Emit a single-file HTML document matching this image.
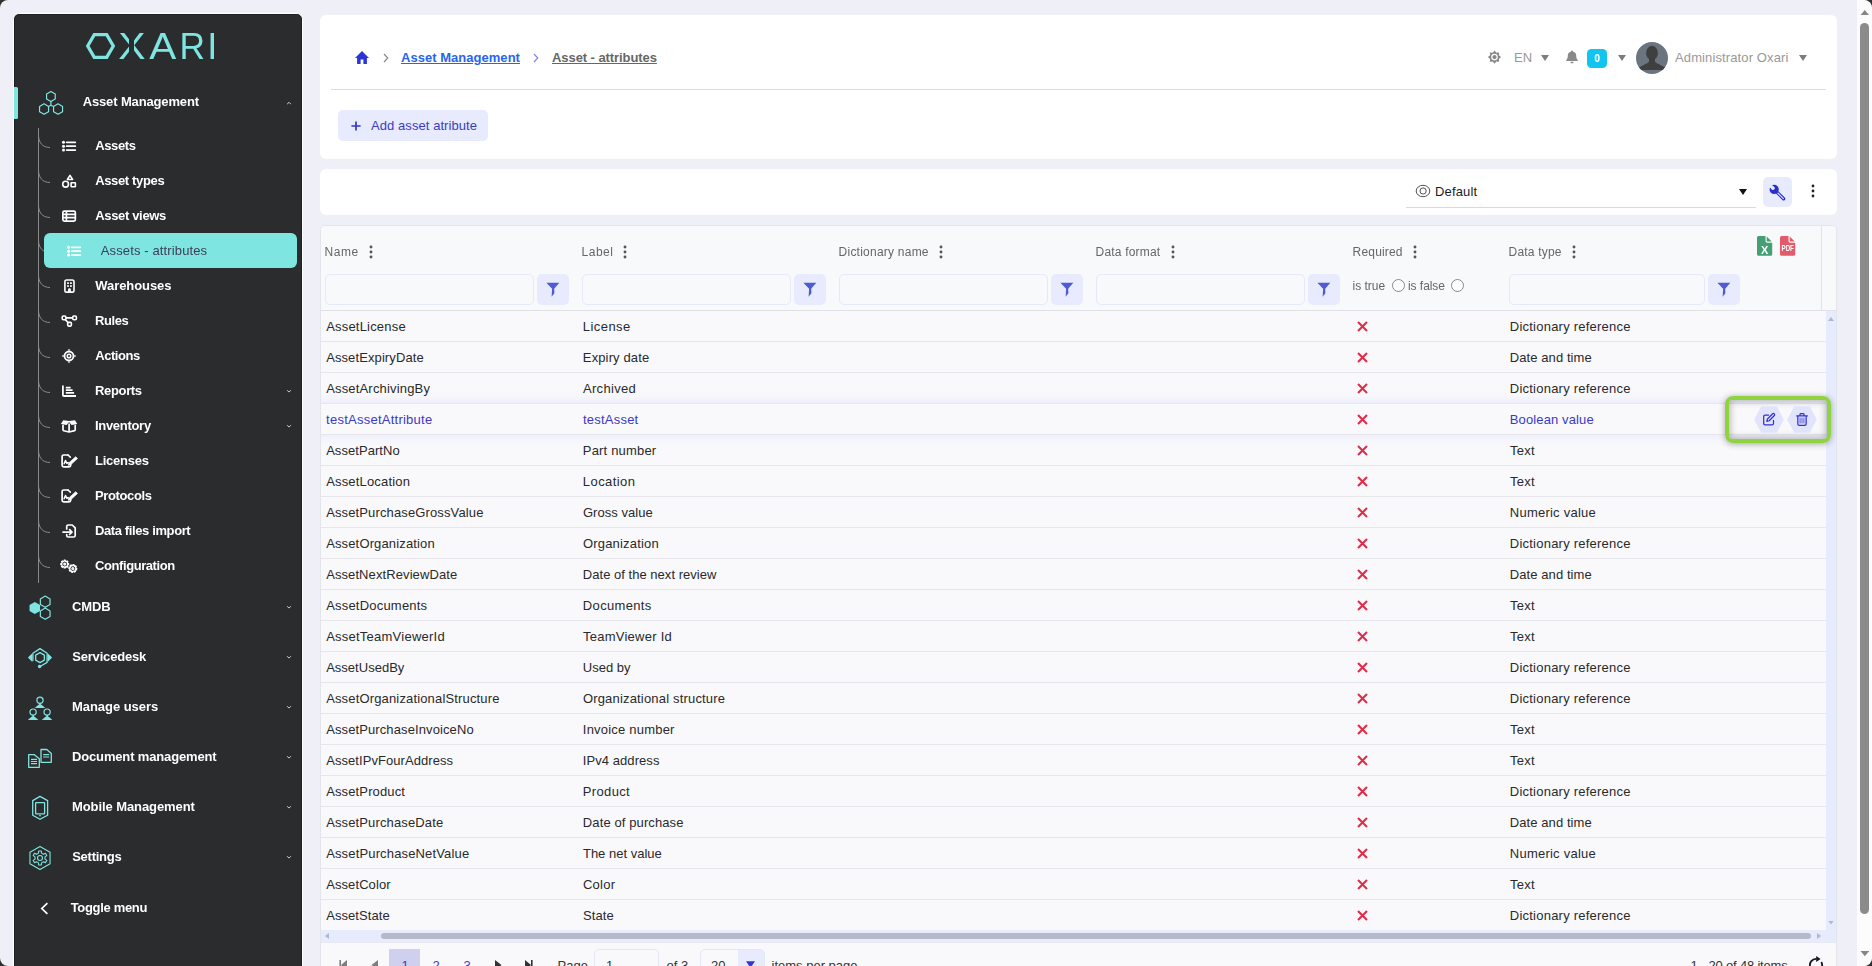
<!DOCTYPE html><html lang="en"><head><meta charset="utf-8"><title>Asset - attributes</title><style>
html{background:#303030;}
body{margin:0;width:1872px;height:966px;overflow:hidden;position:relative;background:#eeeff7;border-radius:8px;font-family:"Liberation Sans",sans-serif;font-size:13px;color:#2b2b2b;}
*{box-sizing:border-box;}
.abs{position:absolute;}
.side{position:absolute;left:13px;top:13px;width:290px;height:954px;background:#2b2c2e;border:1px solid #fff;border-bottom:0;box-shadow:inset 0 0 0 1px #1f1f21;border-radius:6px 6px 0 0;will-change:transform;overflow:hidden;}
.mi{position:absolute;left:0;width:288px;height:24px;}
.mi .ic{position:absolute;left:12px;top:-2px;}
.mi .tx{position:absolute;left:58px;top:1px;line-height:24px;font-weight:bold;font-size:13px;color:#fff;letter-spacing:-0.42px;white-space:nowrap;}
.chev{position:absolute;left:272px;width:6px;height:4px;}
.si{position:absolute;left:0;width:288px;height:20px;}
.si .ic{position:absolute;left:45px;top:0;}
.si .tx{position:absolute;left:81px;top:1px;line-height:20px;font-weight:bold;font-size:13px;color:#fff;letter-spacing:-0.45px;white-space:nowrap;}
.card{position:absolute;left:320px;width:1517px;background:#fff;border-radius:6px;}
.grid{position:absolute;left:320px;top:225px;width:1517px;height:760px;background:#f9f9fc;border:1px solid #e4e5ec;border-radius:5px 5px 0 0;}
.hd{position:absolute;top:245px;line-height:14px;font-size:12px;color:#666;white-space:nowrap;letter-spacing:0.08px;}
.dots{position:absolute;width:4px;height:14px;}
.fin{position:absolute;top:274px;height:31px;border:1px solid #e5e9fb;border-radius:5px;background:#f8f9fb;}
.fbt{position:absolute;top:274px;width:32px;height:31px;border-radius:5px;background:#e7ebfd;}
.row{position:absolute;left:321px;width:1505px;height:31px;border-bottom:1px solid #e6e6ec;}
.c{position:absolute;top:1px;line-height:30px;font-size:13px;color:#2a2a2a;white-space:nowrap;letter-spacing:0.14px;}
.row.hl .c{color:#3a3ac6;}
.x{position:absolute;left:35px;top:10px;}
.pg{position:absolute;top:953.5px;line-height:24px;font-size:13px;color:#3a3ac6;white-space:nowrap;}
</style></head><body>
<div class="side">
<svg class="abs" style="left:66px;top:14px;overflow:visible" width="150" height="36" viewBox="80 28 150 36" role="img" aria-label="OXARI"><title>OXARI</title><g fill="none" stroke="#7fe5e0" stroke-width="3.3"><polygon points="87.7,46 94.3,34.6 106.7,34.6 113.3,46 106.7,57.4 94.3,57.4"/></g><text font-family="Liberation Sans, sans-serif" font-size="36.5" fill="#7fe5e0" y="59"><tspan x="118.2" textLength="27.3" lengthAdjust="spacingAndGlyphs">X</tspan><tspan x="149.2" textLength="27" lengthAdjust="spacingAndGlyphs">A</tspan><tspan x="179.6" textLength="25.5" lengthAdjust="spacingAndGlyphs">R</tspan><tspan x="207.2">I</tspan></text><rect x="129.4" y="30" width="4.9" height="32" fill="#2b2c2e" shape-rendering="crispEdges"/></svg>
<div class="abs" style="left:0;top:73px;width:4px;height:32px;background:#7fe5e0;border-radius:0 1.5px 1.5px 0"></div>
<div class="mi" style="top:77px"><div class="ic" style="left:23px;top:-4px"><svg width="28" height="28" viewBox="0 0 28 28" style="display:block;overflow:visible"><g fill="none" stroke="#7fe5e0" stroke-width="1.2" stroke-linejoin="round"><polygon points="18.23,12 13.9,14.5 9.57,12 9.57,7 13.9,4.5 18.23,7"/><polygon points="11.55,24.65 7.05,27.25 2.55,24.65 2.55,19.45 7.05,16.85 11.55,19.45"/><polygon points="25.55,24.65 21.05,27.25 16.55,24.65 16.55,19.45 21.05,16.85 25.55,19.45"/><path d="M13.9 14.5V18.3M11.55 19.45 13.9 18.3 16.55 19.45"/></g></svg></div><div class="tx" style="left:68.69px;top:-1px;letter-spacing:-0.138px">Asset Management</div></div>
<svg class="chev" style="top:87px" viewBox="0 0 6 4"><path d="M1.1 3.2 L3 1.3 L4.9 3.2" fill="none" stroke="#d0d0d0" stroke-width="1"/></svg>
<svg class="abs" style="left:0;top:0" width="60" height="600" viewBox="14 14 60 600"><g fill="none" stroke="#8a8a8c" stroke-width="1"><path d="M38.5 128V583"/><path d="M38.5 135 C38.5 142 42 147.5 50 147.5"/><path d="M38.5 170 C38.5 177 42 182.5 50 182.5"/><path d="M38.5 205 C38.5 212 42 217.5 50 217.5"/><path d="M38.5 240 C38.5 247 42 252.5 50 252.5"/><path d="M38.5 275 C38.5 282 42 287.5 50 287.5"/><path d="M38.5 310 C38.5 317 42 322.5 50 322.5"/><path d="M38.5 345 C38.5 352 42 357.5 50 357.5"/><path d="M38.5 380 C38.5 387 42 392.5 50 392.5"/><path d="M38.5 415 C38.5 422 42 427.5 50 427.5"/><path d="M38.5 450 C38.5 457 42 462.5 50 462.5"/><path d="M38.5 485 C38.5 492 42 497.5 50 497.5"/><path d="M38.5 520 C38.5 527 42 532.5 50 532.5"/><path d="M38.5 555 C38.5 562 42 567.5 50 567.5"/></g></svg>
<div class="si" style="top:121px"><div class="ic"><svg width="20" height="20" viewBox="0 0 20 20" style="color:#fff;display:block;overflow:visible"><g fill="currentColor"><circle cx="4.5" cy="7.35" r="1.5"/><rect x="6.8" y="6.45" width="10.4" height="1.8" rx="0.9"/><circle cx="4.5" cy="11.2" r="1.5"/><rect x="6.8" y="10.3" width="10.4" height="1.8" rx="0.9"/><circle cx="4.5" cy="15.05" r="1.5"/><rect x="6.8" y="14.15" width="10.4" height="1.8" rx="0.9"/></g></svg></div><div class="tx" style="left:81.19px;letter-spacing:-0.375px">Assets</div></div>
<div class="si" style="top:156px"><div class="ic"><svg width="20" height="20" viewBox="0 0 20 20" style="color:#fff;display:block;overflow:visible"><g fill="none" stroke="currentColor" stroke-width="1.6" stroke-linejoin="round"><path d="M11 5.4 L13.6 9.5 H8.4 Z"/><circle cx="6.6" cy="14.2" r="2.9"/><rect x="12.1" y="12.7" width="4.3" height="4" rx="0.4"/></g></svg></div><div class="tx" style="left:81.19px;letter-spacing:-0.349px">Asset types</div></div>
<div class="si" style="top:191px"><div class="ic"><svg width="20" height="20" viewBox="0 0 20 20" style="color:#fff;display:block;overflow:visible"><g fill="none" stroke="currentColor" stroke-width="1.7"><rect x="3.85" y="6.05" width="12.5" height="10" rx="1.5"/><path d="M3.85 9.4h12.5M3.85 12.7h12.5M7.4 6.05v10"/></g></svg></div><div class="tx" style="left:81.19px;letter-spacing:-0.333px">Asset views</div></div>
<div class="abs" style="left:30px;top:219px;width:253px;height:35px;background:#7fe5e0;border-radius:6px"></div>
<div class="si" style="top:226px"><div class="ic" style="left:50.2px"><svg width="20" height="20" viewBox="0 0 20 20" style="color:#fff;display:block;overflow:visible"><g fill="currentColor"><circle cx="4.5" cy="7.35" r="1.5"/><rect x="6.8" y="6.45" width="10.4" height="1.8" rx="0.9"/><circle cx="4.5" cy="11.2" r="1.5"/><rect x="6.8" y="10.3" width="10.4" height="1.8" rx="0.9"/><circle cx="4.5" cy="15.05" r="1.5"/><rect x="6.8" y="14.15" width="10.4" height="1.8" rx="0.9"/></g></svg></div><div class="tx" style="left:86.8px;font-weight:normal;color:#3b4058;letter-spacing:0.126px">Assets - attributes</div></div>
<div class="si" style="top:261px"><div class="ic"><svg width="20" height="20" viewBox="0 0 20 20" style="color:#fff;display:block;overflow:visible"><rect x="5.9" y="5" width="9.1" height="12.1" rx="1.7" fill="none" stroke="currentColor" stroke-width="1.6"/><g fill="currentColor"><rect x="8.1" y="7.3" width="1.8" height="1.7"/><rect x="11" y="7.3" width="1.8" height="1.7"/><rect x="8.1" y="10.2" width="1.8" height="1.7"/><rect x="11" y="10.2" width="1.8" height="1.7"/><path d="M9 17.1v-2.3a1.45 1.45 0 0 1 2.9 0v2.3z"/></g></svg></div><div class="tx" style="left:81.31px;letter-spacing:-0.075px">Warehouses</div></div>
<div class="si" style="top:296px"><div class="ic"><svg width="20" height="20" viewBox="0 0 20 20" style="color:#fff;display:block;overflow:visible"><g fill="none" stroke="currentColor" stroke-width="1.6"><rect x="3.2" y="6" width="3.7" height="3.7" rx="1.2"/><rect x="13.7" y="6" width="3.7" height="3.7" rx="1.2"/><rect x="8.7" y="12.4" width="3.7" height="3.7" rx="1"/><path d="M6.9 7.85h6.8M6.3 9.6 9.3 12.7"/></g></svg></div><div class="tx" style="left:80.99px;letter-spacing:-0.406px">Rules</div></div>
<div class="si" style="top:331px"><div class="ic"><svg width="20" height="20" viewBox="0 0 20 20" style="color:#fff;display:block;overflow:visible"><g fill="none" stroke="currentColor"><circle cx="10" cy="11" r="4.5" stroke-width="1.8"/><circle cx="10" cy="11" r="1.8" stroke-width="1.5"/></g><g fill="currentColor"><path d="M8.7 5.6 10 3.7 11.3 5.6zM8.7 16.4 10 18.3 11.3 16.4zM4.6 9.7 2.7 11 4.6 12.3zM15.4 9.7 17.3 11 15.4 12.3z"/></g></svg></div><div class="tx" style="left:81.19px;letter-spacing:-0.446px">Actions</div></div>
<div class="si" style="top:366px"><div class="ic"><svg width="20" height="20" viewBox="0 0 20 20" style="color:#fff;display:block;overflow:visible"><g fill="none" stroke="currentColor"><path d="M3.9 5.4v9.5a1.1 1.1 0 0 0 1.1 1.1h12" stroke-width="1.8"/><path d="M6.8 7.6h4.8M6.8 10.2h6.8M6.8 12.8h8.3" stroke-width="1.8"/></g></svg></div><div class="tx" style="left:80.99px;letter-spacing:-0.335px">Reports</div></div>
<svg class="chev" style="top:375px" viewBox="0 0 6 4"><path d="M1.1 1.2 L3 3.1 L4.9 1.2" fill="none" stroke="#d0d0d0" stroke-width="1"/></svg>
<div class="si" style="top:401px"><div class="ic"><svg width="20" height="20" viewBox="0 0 20 20" style="color:#fff;display:block;overflow:visible"><g fill="currentColor"><path d="M4.2 5.3 10.1 6.1 16 5.3 18.3 9 12.6 10 10.1 7 7.6 10 1.9 9z"/></g><g fill="none" stroke="currentColor" stroke-width="1.7" stroke-linejoin="round"><path d="M4 9.8v5.1a.8.8 0 0 0 .6.8l5.5 1.3 5.5-1.3a.8.8 0 0 0 .6-.8V9.8"/><path d="M10.1 8.5v8.3"/></g></svg></div><div class="tx" style="left:80.99px;letter-spacing:-0.298px">Inventory</div></div>
<svg class="chev" style="top:410px" viewBox="0 0 6 4"><path d="M1.1 1.2 L3 3.1 L4.9 1.2" fill="none" stroke="#d0d0d0" stroke-width="1"/></svg>
<div class="si" style="top:436px"><div class="ic"><svg width="20" height="20" viewBox="0 0 20 20" style="color:#fff;display:block;overflow:visible"><g fill="none" stroke="currentColor" stroke-linejoin="round" stroke-linecap="round"><path d="M9 5H4.7A1.6 1.6 0 0 0 3.1 6.6v8.7a1.6 1.6 0 0 0 1.6 1.6h5.4a1.6 1.6 0 0 0 1.6-1.6v-.9" stroke-width="1.7"/><path d="M9 5 11.3 7.2" stroke-width="1.6"/><path d="M5.1 13.8 6.5 10.5 7.9 13.3 9.2 12.6" stroke-width="1.5"/></g><path d="M16.7 6.7 18.5 8.5 11.7 14.7 9.1 15.3 9.9 12.9z" fill="currentColor" stroke="currentColor" stroke-width="0.7" stroke-linejoin="round"/></svg></div><div class="tx" style="left:80.99px;letter-spacing:-0.225px">Licenses</div></div>
<div class="si" style="top:471px"><div class="ic"><svg width="20" height="20" viewBox="0 0 20 20" style="color:#fff;display:block;overflow:visible"><g fill="none" stroke="currentColor" stroke-linejoin="round" stroke-linecap="round"><path d="M9 5H4.7A1.6 1.6 0 0 0 3.1 6.6v8.7a1.6 1.6 0 0 0 1.6 1.6h5.4a1.6 1.6 0 0 0 1.6-1.6v-.9" stroke-width="1.7"/><path d="M9 5 11.3 7.2" stroke-width="1.6"/><path d="M5.1 13.8 6.5 10.5 7.9 13.3 9.2 12.6" stroke-width="1.5"/></g><path d="M16.7 6.7 18.5 8.5 11.7 14.7 9.1 15.3 9.9 12.9z" fill="currentColor" stroke="currentColor" stroke-width="0.7" stroke-linejoin="round"/></svg></div><div class="tx" style="left:80.99px;letter-spacing:-0.373px">Protocols</div></div>
<div class="si" style="top:506px"><div class="ic"><svg width="20" height="20" viewBox="0 0 20 20" style="color:#fff;display:block;overflow:visible"><g fill="none" stroke="currentColor" stroke-width="1.7" stroke-linejoin="round" stroke-linecap="round"><path d="M7.7 9V6.6A1.6 1.6 0 0 1 9.3 5h3.9l3 2.9v7.5a1.6 1.6 0 0 1-1.6 1.6H9.3a1.6 1.6 0 0 1-1.6-1.6v-.8"/><path d="M4 12.1h8.8M10.6 9.7l2.4 2.4-2.4 2.4"/></g></svg></div><div class="tx" style="left:80.99px;letter-spacing:-0.384px">Data files import</div></div>
<div class="si" style="top:541px"><div class="ic"><svg width="20" height="20" viewBox="0 0 20 20" style="color:#fff;display:block;overflow:visible"><g fill="none" stroke="currentColor" stroke-width="1.3" stroke-linejoin="round"><polygon points="5.15,5.24 6.25,5.24 6.35,6.27 7.23,6.64 8.04,5.98 8.82,6.76 8.16,7.57 8.53,8.45 9.56,8.55 9.56,9.65 8.53,9.75 8.16,10.63 8.82,11.44 8.04,12.22 7.23,11.56 6.35,11.93 6.25,12.96 5.15,12.96 5.05,11.93 4.17,11.56 3.36,12.22 2.58,11.44 3.24,10.63 2.87,9.75 1.84,9.65 1.84,8.55 2.87,8.45 3.24,7.57 2.58,6.76 3.36,5.98 4.17,6.64 5.05,6.27"/><circle cx="5.7" cy="9.1" r="0.9"/><polygon points="14.03,9.61 15.11,9.83 15,10.86 15.79,11.39 16.71,10.91 17.32,11.82 16.52,12.48 16.7,13.42 17.69,13.73 17.47,14.81 16.44,14.7 15.91,15.49 16.39,16.41 15.48,17.02 14.82,16.22 13.88,16.4 13.57,17.39 12.49,17.17 12.6,16.14 11.81,15.61 10.89,16.09 10.28,15.18 11.08,14.52 10.9,13.58 9.91,13.27 10.13,12.19 11.16,12.3 11.69,11.51 11.21,10.59 12.12,9.98 12.78,10.78 13.72,10.6"/><circle cx="13.8" cy="13.5" r="0.9"/></g></svg></div><div class="tx" style="left:81.11px;letter-spacing:-0.436px">Configuration</div></div>
<div class="mi" style="top:580px"><div class="ic"><svg width="28" height="28" viewBox="0 0 28 28" style="display:block;overflow:visible"><polygon points="14.08,19.05 8.8,22.1 3.52,19.05 3.52,12.95 8.8,9.9 14.08,12.95" fill="#7fe5e0"/><g fill="none" stroke="#7fe5e0" stroke-width="1.2" stroke-linejoin="round"><polygon points="24.05,12.5 19.2,15.3 14.35,12.5 14.35,6.9 19.2,4.1 24.05,6.9"/><polygon points="24.05,24.5 19.2,27.3 14.35,24.5 14.35,18.9 19.2,16.1 24.05,18.9"/></g></svg></div><div class="tx" style="left:58.11px;letter-spacing:-0.146px">CMDB</div></div>
<svg class="chev" style="top:591px" viewBox="0 0 6 4"><path d="M1.1 1.2 L3 3.1 L4.9 1.2" fill="none" stroke="#d0d0d0" stroke-width="1"/></svg>
<div class="mi" style="top:630px"><div class="ic"><svg width="28" height="28" viewBox="0 0 28 28" style="display:block;overflow:visible"><g fill="none" stroke="#7fe5e0" stroke-width="1.3" stroke-linejoin="round" stroke-linecap="round"><path d="M6.9 18.6V11.2L14 6.6l7.1 4.6v9.2L14.5 24.3"/><polygon points="18.33,18.1 14,20.6 9.67,18.1 9.67,13.1 14,10.6 18.33,13.1"/></g><g fill="#7fe5e0"><path d="M6.3 11.2v8.8L1.9 15.6z"/><path d="M21.7 11.2v8.8l4.4-4.4z"/><circle cx="13.6" cy="24.5" r="1.7"/></g></svg></div><div class="tx" style="left:58.16px;letter-spacing:-0.176px">Servicedesk</div></div>
<svg class="chev" style="top:641px" viewBox="0 0 6 4"><path d="M1.1 1.2 L3 3.1 L4.9 1.2" fill="none" stroke="#d0d0d0" stroke-width="1"/></svg>
<div class="mi" style="top:680px"><div class="ic"><svg width="28" height="28" viewBox="0 0 28 28" style="display:block;overflow:visible"><circle cx="14" cy="8.2" r="3.1" fill="none" stroke="#7fe5e0" stroke-width="1.2"/><path d="M8.7 16.1 L12.4 12.8 H15.6 L19.3 16.1Z" fill="#7fe5e0"/><path d="M14 11.3v2" stroke="#7fe5e0" stroke-width="1.8"/><circle cx="7.1" cy="20.1" r="3.1" fill="none" stroke="#7fe5e0" stroke-width="1.2"/><path d="M1.8 28 L5.5 24.7 H8.7 L12.4 28Z" fill="#7fe5e0"/><path d="M7.1 23.2v2" stroke="#7fe5e0" stroke-width="1.8"/><circle cx="21.1" cy="20.1" r="3.1" fill="none" stroke="#7fe5e0" stroke-width="1.2"/><path d="M15.8 28 L19.5 24.7 H22.7 L26.4 28Z" fill="#7fe5e0"/><path d="M21.1 23.2v2" stroke="#7fe5e0" stroke-width="1.8"/></svg></div><div class="tx" style="left:57.99px;letter-spacing:-0.04px">Manage users</div></div>
<svg class="chev" style="top:691px" viewBox="0 0 6 4"><path d="M1.1 1.2 L3 3.1 L4.9 1.2" fill="none" stroke="#d0d0d0" stroke-width="1"/></svg>
<div class="mi" style="top:730px"><div class="ic"><svg width="28" height="28" viewBox="0 0 28 28" style="display:block;overflow:visible"><g fill="none" stroke="#7fe5e0" stroke-width="1.3" stroke-linejoin="round"><path d="M15 7.5h5.8l4.5 4v8.8H15z"/><path d="M17.2 12.7h6M17.2 15h6" stroke-width="1.2"/><path d="M2.7 12.7h5.6l5 4v8.6H2.7z"/><path d="M5 17.4h6M5 19.5h6M5 21.6h6" stroke-width="1.1"/></g></svg></div><div class="tx" style="left:57.99px;letter-spacing:-0.152px">Document management</div></div>
<svg class="chev" style="top:741px" viewBox="0 0 6 4"><path d="M1.1 1.2 L3 3.1 L4.9 1.2" fill="none" stroke="#d0d0d0" stroke-width="1"/></svg>
<div class="mi" style="top:780px"><div class="ic"><svg width="28" height="28" viewBox="0 0 28 28" style="display:block;overflow:visible"><g fill="none" stroke="#7fe5e0" stroke-width="1.3" stroke-linejoin="round"><path d="M14 4.4 21.6 8.6V23.2L14 27.3 6.7 23.2V8.6z"/><rect x="9.6" y="10.6" width="9" height="11.2" rx="0.6"/></g><rect x="13" y="23.2" width="2" height="1" fill="#7fe5e0"/></svg></div><div class="tx" style="left:57.99px;letter-spacing:-0.082px">Mobile Management</div></div>
<svg class="chev" style="top:791px" viewBox="0 0 6 4"><path d="M1.1 1.2 L3 3.1 L4.9 1.2" fill="none" stroke="#d0d0d0" stroke-width="1"/></svg>
<div class="mi" style="top:830px"><div class="ic"><svg width="28" height="28" viewBox="0 0 28 28" style="display:block;overflow:visible"><g fill="none" stroke="#7fe5e0" stroke-width="1.1" stroke-linejoin="round"><polygon points="24.05,21.8 14,27.6 3.95,21.8 3.95,10.2 14,4.4 24.05,10.2"/><polygon points="12.65,8.93 15.35,8.93 15.53,11.13 17.45,12.25 19.45,11.3 20.8,13.63 18.98,14.89 18.98,17.11 20.8,18.37 19.45,20.7 17.45,19.75 15.53,20.87 15.35,23.07 12.65,23.07 12.47,20.87 10.55,19.75 8.55,20.7 7.2,18.37 9.02,17.11 9.02,14.89 7.2,13.63 8.55,11.3 10.55,12.25 12.47,11.13"/><circle cx="14" cy="16" r="2.5"/></g></svg></div><div class="tx" style="left:58.16px;letter-spacing:-0.248px">Settings</div></div>
<svg class="chev" style="top:841px" viewBox="0 0 6 4"><path d="M1.1 1.2 L3 3.1 L4.9 1.2" fill="none" stroke="#d0d0d0" stroke-width="1"/></svg>
<svg class="abs" style="left:26px;top:888px" width="9" height="13" viewBox="0 0 9 13"><path d="M7.4 1.2 L1.8 6.5 L7.4 11.8" fill="none" stroke="#fff" stroke-width="1.7"/></svg>
<div class="mi" style="top:881px"><div class="tx" style="left:56.67px;letter-spacing:-0.32px">Toggle menu</div></div>
</div>
<div class="card" style="top:15px;height:144px"></div>
<svg class="abs" style="left:355px;top:51px" width="14" height="13" viewBox="0 0 14 13"><path d="M5.6 13.01V8.42H8.4V13.01H11.9V6.88H14L7 0 0 6.88H2.1V13.01Z" fill="#2b35d6"/></svg>
<svg class="abs" style="left:383px;top:53px" width="6" height="10" viewBox="0 0 6 10"><path d="M1 1 L4.8 5 L1 9" fill="none" stroke="#8a8a8a" stroke-width="1.2"/></svg>
<div class="abs" style="left:401px;top:48px;line-height:20px;font-weight:bold;font-size:13px;color:#2765ee;text-decoration:underline;white-space:nowrap;letter-spacing:0.03px">Asset Management</div>
<svg class="abs" style="left:533px;top:53px" width="6" height="10" viewBox="0 0 6 10"><path d="M1 1 L4.8 5 L1 9" fill="none" stroke="#8585e6" stroke-width="1.2"/></svg>
<div class="abs" style="left:552px;top:48px;line-height:20px;font-weight:bold;font-size:13px;color:#676767;text-decoration:underline;white-space:nowrap;letter-spacing:-0.07px">Asset - attributes</div>
<div class="abs" style="left:331px;top:89px;width:1495px;height:1px;background:#dddde4"></div>
<div class="abs" style="left:338px;top:110px;width:150px;height:31px;background:#e7ebfd;border-radius:5px"></div>
<svg class="abs" style="left:351px;top:121px" width="10" height="10" viewBox="0 0 10 10"><path d="M5 0.4V9.6M0.4 5H9.6" stroke="#3535c8" stroke-width="1.7"/></svg>
<div class="abs" style="left:371px;top:116px;line-height:20px;font-size:13px;color:#3c3cc4;white-space:nowrap;letter-spacing:0.07px">Add asset atribute</div>
<svg class="abs" style="left:1487px;top:50px" width="15" height="15" viewBox="0 0 15 15"><polygon points="7.5,0.5 9.3,2.76 12.17,2.43 11.84,5.3 14.1,7.1 11.84,8.9 12.17,11.77 9.3,11.44 7.5,13.7 5.7,11.44 2.83,11.77 3.16,8.9 0.9,7.1 3.16,5.3 2.83,2.43 5.7,2.76" fill="#878787"/><circle cx="7.5" cy="7.1" r="3.3" fill="#fff"/><circle cx="7.5" cy="7.1" r="2.1" fill="#878787"/></svg>
<div class="abs" style="left:1514px;top:48px;line-height:20px;font-size:13px;color:#999;white-space:nowrap">EN</div>
<svg class="abs" style="left:1541px;top:54.8px" width="8" height="6" viewBox="0 0 8 6"><path d="M0 0H8L4 6Z" fill="#7d7d7d"/></svg>
<svg class="abs" style="left:1566px;top:50px" width="12" height="14" viewBox="0 0 12 14"><path d="M6 0.4a1 1 0 0 1 1 1v.3A4 4 0 0 1 10.2 5.6c0 2.4.6 3.6 1.5 4.5v.9H.3v-.9C1.2 9.2 1.8 8 1.8 5.6A4 4 0 0 1 5 1.7V1.4a1 1 0 0 1 1-1zM4.4 11.8h3.2a1.6 1.6 0 0 1-3.2 0z" fill="#8a8a8a"/></svg>
<div class="abs" style="left:1587px;top:49px;width:20px;height:19px;background:#10c5ef;border-radius:4.5px;color:#fff;font-weight:bold;font-size:10px;line-height:20px;text-align:center">0</div>
<svg class="abs" style="left:1618px;top:54.8px" width="8" height="6" viewBox="0 0 8 6"><path d="M0 0H8L4 6Z" fill="#7d7d7d"/></svg>
<svg class="abs" style="left:1636px;top:42px" width="32" height="32" viewBox="0 0 32 32"><defs><clipPath id="av"><circle cx="16" cy="16" r="16"/></clipPath></defs><circle cx="16" cy="16" r="16" fill="#6b7580"/><g clip-path="url(#av)" fill="#3f3f3f"><ellipse cx="16" cy="11" rx="5.9" ry="7.2"/><path d="M2 26 L12.4 20.6 Q13.4 19.6 13 16 H19 Q18.6 19.6 19.6 20.6 L30 26 V28.1 H2 Z"/></g></svg>
<div class="abs" style="left:1675px;top:48px;line-height:20px;font-size:13px;color:#999;white-space:nowrap;letter-spacing:0.12px">Administrator Oxari</div>
<svg class="abs" style="left:1799px;top:54.8px" width="8" height="6" viewBox="0 0 8 6"><path d="M0 0H8L4 6Z" fill="#7d7d7d"/></svg>
<div class="card" style="top:169px;height:46px"></div>
<svg class="abs" style="left:1415px;top:184px" width="16" height="14" viewBox="0 0 16 14"><g fill="none" stroke="#4a4a4a" stroke-width="0.95"><ellipse cx="8" cy="7" rx="6.8" ry="5.7"/><circle cx="8.1" cy="7" r="3.1"/></g></svg>
<div class="abs" style="left:1435px;top:182px;line-height:20px;font-size:13px;color:#1c1c1c;white-space:nowrap;letter-spacing:0.15px">Default</div>
<svg class="abs" style="left:1739px;top:189px" width="8" height="6" viewBox="0 0 8 6"><path d="M0 0H8L4 6Z" fill="#111"/></svg>
<div class="abs" style="left:1406px;top:207px;width:350px;height:1px;background:#d9d9e2"></div>
<div class="abs" style="left:1763px;top:177px;width:29px;height:30px;background:#e7ebfd;border-radius:5px"></div>
<svg class="abs" style="left:1765px;top:180px" width="24" height="24" viewBox="1765 180 24 24"><g transform="rotate(45 1774.2 189.4)"><rect x="1778" y="1888.1" width="0" height="0"/></g><path d="M1777.4 192.6 L1783.6 198.8" stroke="#2a2ecf" stroke-width="3.4" stroke-linecap="round"/><path d="M1777.8 193 L1783.4 198.6" stroke="#dfe3fb" stroke-width="1.1" stroke-linecap="round"/><circle cx="1774.2" cy="189.4" r="4.6" fill="#2a2ecf"/><path d="M1773.4 188.6 L1769.6 184.8" stroke="#e7ebfd" stroke-width="3.2"/><circle cx="1773" cy="188.2" r="1.7" fill="#e7ebfd"/></svg>
<svg class="abs" style="left:1811.2px;top:184px" width="4" height="14" viewBox="0 0 4 14"><g fill="#222"><circle cx="2" cy="2" r="1.4"/><circle cx="2" cy="7" r="1.4"/><circle cx="2" cy="12" r="1.4"/></g></svg>
<div class="grid"></div>
<div class="abs" style="left:321px;top:226px;width:1515px;height:84px;background:#f8f9fb;border-radius:4px 4px 0 0"></div>
<svg class="dots" style="left:369.15px;top:244.5px" viewBox="0 0 4 14"><g fill="#555"><circle cx="2" cy="2" r="1.45"/><circle cx="2" cy="7" r="1.45"/><circle cx="2" cy="12" r="1.45"/></g></svg>
<svg class="dots" style="left:623.4px;top:244.5px" viewBox="0 0 4 14"><g fill="#555"><circle cx="2" cy="2" r="1.45"/><circle cx="2" cy="7" r="1.45"/><circle cx="2" cy="12" r="1.45"/></g></svg>
<svg class="dots" style="left:939.4px;top:244.5px" viewBox="0 0 4 14"><g fill="#555"><circle cx="2" cy="2" r="1.45"/><circle cx="2" cy="7" r="1.45"/><circle cx="2" cy="12" r="1.45"/></g></svg>
<svg class="dots" style="left:1171.4px;top:244.5px" viewBox="0 0 4 14"><g fill="#555"><circle cx="2" cy="2" r="1.45"/><circle cx="2" cy="7" r="1.45"/><circle cx="2" cy="12" r="1.45"/></g></svg>
<svg class="dots" style="left:1413.15px;top:244.5px" viewBox="0 0 4 14"><g fill="#555"><circle cx="2" cy="2" r="1.45"/><circle cx="2" cy="7" r="1.45"/><circle cx="2" cy="12" r="1.45"/></g></svg>
<svg class="dots" style="left:1572.4px;top:244.5px" viewBox="0 0 4 14"><g fill="#555"><circle cx="2" cy="2" r="1.45"/><circle cx="2" cy="7" r="1.45"/><circle cx="2" cy="12" r="1.45"/></g></svg>
<div class="fin" style="left:325px;width:209px"></div><div class="fbt" style="left:537px"><svg style="position:absolute;left:9px;top:8px;overflow:visible" width="14" height="15" viewBox="0 0 14 15"><path d="M0.4 0.8H13.3L8.2 6.7L8.4 11.2L5.6 14.8L6.1 6.7Z" fill="#4f5bd5"/></svg></div>
<div class="fin" style="left:582px;width:209px"></div><div class="fbt" style="left:794px"><svg style="position:absolute;left:9px;top:8px;overflow:visible" width="14" height="15" viewBox="0 0 14 15"><path d="M0.4 0.8H13.3L8.2 6.7L8.4 11.2L5.6 14.8L6.1 6.7Z" fill="#4f5bd5"/></svg></div>
<div class="fin" style="left:839px;width:209px"></div><div class="fbt" style="left:1051px"><svg style="position:absolute;left:9px;top:8px;overflow:visible" width="14" height="15" viewBox="0 0 14 15"><path d="M0.4 0.8H13.3L8.2 6.7L8.4 11.2L5.6 14.8L6.1 6.7Z" fill="#4f5bd5"/></svg></div>
<div class="fin" style="left:1096px;width:209px"></div><div class="fbt" style="left:1308px"><svg style="position:absolute;left:9px;top:8px;overflow:visible" width="14" height="15" viewBox="0 0 14 15"><path d="M0.4 0.8H13.3L8.2 6.7L8.4 11.2L5.6 14.8L6.1 6.7Z" fill="#4f5bd5"/></svg></div>
<div class="fin" style="left:1509px;width:196px"></div><div class="fbt" style="left:1708px"><svg style="position:absolute;left:9px;top:8px;overflow:visible" width="14" height="15" viewBox="0 0 14 15"><path d="M0.4 0.8H13.3L8.2 6.7L8.4 11.2L5.6 14.8L6.1 6.7Z" fill="#4f5bd5"/></svg></div>
<div class="abs" style="left:1392px;top:279px;width:13px;height:13px;border:1px solid #8a8a8a;border-radius:50%;background:#fff"></div>
<div class="abs" style="left:1451px;top:279px;width:13px;height:13px;border:1px solid #8a8a8a;border-radius:50%;background:#fff"></div>
<div class="abs" style="left:321px;top:310px;width:1515px;height:1px;background:#dfe0e8"></div>
<div class="abs" style="left:1821px;top:226px;width:1px;height:84px;background:#e0e3ea"></div>
<div class="abs" style="left:321px;top:380px;width:1505px;height:80px;overflow:hidden"><div class="abs" style="left:-20px;top:24px;width:1545px;height:30px;box-shadow:0 0 12px 1px rgba(120,135,235,0.17);background:#f9f9fc"></div></div>
<div class="row" style="top:311px"><div class="c" style="left:5.15px;letter-spacing:0.199px">AssetLicense</div><div class="c" style="left:261.84px;letter-spacing:0.427px">License</div><svg class="x" style="left:1035.5px" width="11" height="11" viewBox="0 0 11 11"><path d="M1 1 L10 10 M10 1 L1 10" stroke="#df2c49" stroke-width="2.05" fill="none"/></svg><div class="c" style="left:1188.84px;letter-spacing:0.224px">Dictionary reference</div></div>
<div class="row" style="top:342px"><div class="c" style="left:5.15px;letter-spacing:0.103px">AssetExpiryDate</div><div class="c" style="left:261.84px;letter-spacing:0.131px">Expiry date</div><svg class="x" style="left:1035.5px" width="11" height="11" viewBox="0 0 11 11"><path d="M1 1 L10 10 M10 1 L1 10" stroke="#df2c49" stroke-width="2.05" fill="none"/></svg><div class="c" style="left:1188.84px;letter-spacing:0.078px">Date and time</div></div>
<div class="row" style="top:373px"><div class="c" style="left:5.15px;letter-spacing:0.175px">AssetArchivingBy</div><div class="c" style="left:262px;letter-spacing:0.312px">Archived</div><svg class="x" style="left:1035.5px" width="11" height="11" viewBox="0 0 11 11"><path d="M1 1 L10 10 M10 1 L1 10" stroke="#df2c49" stroke-width="2.05" fill="none"/></svg><div class="c" style="left:1188.84px;letter-spacing:0.224px">Dictionary reference</div></div>
<div class="row hl" style="top:404px"><div class="c" style="left:5.12px;letter-spacing:0.243px">testAssetAttribute</div><div class="c" style="left:261.97px;letter-spacing:0.219px">testAsset</div><svg class="x" style="left:1035.5px" width="11" height="11" viewBox="0 0 11 11"><path d="M1 1 L10 10 M10 1 L1 10" stroke="#df2c49" stroke-width="2.05" fill="none"/></svg><div class="c" style="left:1188.84px;letter-spacing:0.12px">Boolean value</div></div>
<div class="row" style="top:435px"><div class="c" style="left:5.15px;letter-spacing:0.056px">AssetPartNo</div><div class="c" style="left:261.84px;letter-spacing:0.175px">Part number</div><svg class="x" style="left:1035.5px" width="11" height="11" viewBox="0 0 11 11"><path d="M1 1 L10 10 M10 1 L1 10" stroke="#df2c49" stroke-width="2.05" fill="none"/></svg><div class="c" style="left:1188.96px;letter-spacing:0.312px">Text</div></div>
<div class="row" style="top:466px"><div class="c" style="left:5.15px;letter-spacing:0.177px">AssetLocation</div><div class="c" style="left:261.84px;letter-spacing:0.42px">Location</div><svg class="x" style="left:1035.5px" width="11" height="11" viewBox="0 0 11 11"><path d="M1 1 L10 10 M10 1 L1 10" stroke="#df2c49" stroke-width="2.05" fill="none"/></svg><div class="c" style="left:1188.96px;letter-spacing:0.312px">Text</div></div>
<div class="row" style="top:497px"><div class="c" style="left:5.15px;letter-spacing:0.131px">AssetPurchaseGrossValue</div><div class="c" style="left:261.91px;letter-spacing:0.056px">Gross value</div><svg class="x" style="left:1035.5px" width="11" height="11" viewBox="0 0 11 11"><path d="M1 1 L10 10 M10 1 L1 10" stroke="#df2c49" stroke-width="2.05" fill="none"/></svg><div class="c" style="left:1188.84px;letter-spacing:0.233px">Numeric value</div></div>
<div class="row" style="top:528px"><div class="c" style="left:5.15px;letter-spacing:0.145px">AssetOrganization</div><div class="c" style="left:261.92px;letter-spacing:0.193px">Organization</div><svg class="x" style="left:1035.5px" width="11" height="11" viewBox="0 0 11 11"><path d="M1 1 L10 10 M10 1 L1 10" stroke="#df2c49" stroke-width="2.05" fill="none"/></svg><div class="c" style="left:1188.84px;letter-spacing:0.224px">Dictionary reference</div></div>
<div class="row" style="top:559px"><div class="c" style="left:5.15px;letter-spacing:0.094px">AssetNextReviewDate</div><div class="c" style="left:261.84px;letter-spacing:0.026px">Date of the next review</div><svg class="x" style="left:1035.5px" width="11" height="11" viewBox="0 0 11 11"><path d="M1 1 L10 10 M10 1 L1 10" stroke="#df2c49" stroke-width="2.05" fill="none"/></svg><div class="c" style="left:1188.84px;letter-spacing:0.078px">Date and time</div></div>
<div class="row" style="top:590px"><div class="c" style="left:5.15px;letter-spacing:0.207px">AssetDocuments</div><div class="c" style="left:261.84px;letter-spacing:0.344px">Documents</div><svg class="x" style="left:1035.5px" width="11" height="11" viewBox="0 0 11 11"><path d="M1 1 L10 10 M10 1 L1 10" stroke="#df2c49" stroke-width="2.05" fill="none"/></svg><div class="c" style="left:1188.96px;letter-spacing:0.312px">Text</div></div>
<div class="row" style="top:621px"><div class="c" style="left:5.15px;letter-spacing:0.242px">AssetTeamViewerId</div><div class="c" style="left:261.96px;letter-spacing:0.255px">TeamViewer Id</div><svg class="x" style="left:1035.5px" width="11" height="11" viewBox="0 0 11 11"><path d="M1 1 L10 10 M10 1 L1 10" stroke="#df2c49" stroke-width="2.05" fill="none"/></svg><div class="c" style="left:1188.96px;letter-spacing:0.312px">Text</div></div>
<div class="row" style="top:652px"><div class="c" style="left:5.15px;letter-spacing:0.019px">AssetUsedBy</div><div class="c" style="left:261.85px;letter-spacing:0.01px">Used by</div><svg class="x" style="left:1035.5px" width="11" height="11" viewBox="0 0 11 11"><path d="M1 1 L10 10 M10 1 L1 10" stroke="#df2c49" stroke-width="2.05" fill="none"/></svg><div class="c" style="left:1188.84px;letter-spacing:0.224px">Dictionary reference</div></div>
<div class="row" style="top:683px"><div class="c" style="left:5.15px;letter-spacing:0.155px">AssetOrganizationalStructure</div><div class="c" style="left:261.92px;letter-spacing:0.177px">Organizational structure</div><svg class="x" style="left:1035.5px" width="11" height="11" viewBox="0 0 11 11"><path d="M1 1 L10 10 M10 1 L1 10" stroke="#df2c49" stroke-width="2.05" fill="none"/></svg><div class="c" style="left:1188.84px;letter-spacing:0.224px">Dictionary reference</div></div>
<div class="row" style="top:714px"><div class="c" style="left:5.15px;letter-spacing:0.11px">AssetPurchaseInvoiceNo</div><div class="c" style="left:261.82px;letter-spacing:0.212px">Invoice number</div><svg class="x" style="left:1035.5px" width="11" height="11" viewBox="0 0 11 11"><path d="M1 1 L10 10 M10 1 L1 10" stroke="#df2c49" stroke-width="2.05" fill="none"/></svg><div class="c" style="left:1188.96px;letter-spacing:0.312px">Text</div></div>
<div class="row" style="top:745px"><div class="c" style="left:5.15px;letter-spacing:0.066px">AssetIPvFourAddress</div><div class="c" style="left:261.82px;letter-spacing:0.068px">IPv4 address</div><svg class="x" style="left:1035.5px" width="11" height="11" viewBox="0 0 11 11"><path d="M1 1 L10 10 M10 1 L1 10" stroke="#df2c49" stroke-width="2.05" fill="none"/></svg><div class="c" style="left:1188.96px;letter-spacing:0.312px">Text</div></div>
<div class="row" style="top:776px"><div class="c" style="left:5.15px;letter-spacing:0.136px">AssetProduct</div><div class="c" style="left:261.84px;letter-spacing:0.344px">Product</div><svg class="x" style="left:1035.5px" width="11" height="11" viewBox="0 0 11 11"><path d="M1 1 L10 10 M10 1 L1 10" stroke="#df2c49" stroke-width="2.05" fill="none"/></svg><div class="c" style="left:1188.84px;letter-spacing:0.224px">Dictionary reference</div></div>
<div class="row" style="top:807px"><div class="c" style="left:5.15px;letter-spacing:0.133px">AssetPurchaseDate</div><div class="c" style="left:261.84px;letter-spacing:0.108px">Date of purchase</div><svg class="x" style="left:1035.5px" width="11" height="11" viewBox="0 0 11 11"><path d="M1 1 L10 10 M10 1 L1 10" stroke="#df2c49" stroke-width="2.05" fill="none"/></svg><div class="c" style="left:1188.84px;letter-spacing:0.078px">Date and time</div></div>
<div class="row" style="top:838px"><div class="c" style="left:5.15px;letter-spacing:0.153px">AssetPurchaseNetValue</div><div class="c" style="left:261.96px;letter-spacing:0px">The net value</div><svg class="x" style="left:1035.5px" width="11" height="11" viewBox="0 0 11 11"><path d="M1 1 L10 10 M10 1 L1 10" stroke="#df2c49" stroke-width="2.05" fill="none"/></svg><div class="c" style="left:1188.84px;letter-spacing:0.233px">Numeric value</div></div>
<div class="row" style="top:869px"><div class="c" style="left:5.15px;letter-spacing:0.097px">AssetColor</div><div class="c" style="left:261.91px;letter-spacing:0.25px">Color</div><svg class="x" style="left:1035.5px" width="11" height="11" viewBox="0 0 11 11"><path d="M1 1 L10 10 M10 1 L1 10" stroke="#df2c49" stroke-width="2.05" fill="none"/></svg><div class="c" style="left:1188.96px;letter-spacing:0.312px">Text</div></div>
<div class="row" style="top:900px"><div class="c" style="left:5.15px;letter-spacing:0.076px">AssetState</div><div class="c" style="left:261.92px;letter-spacing:0.125px">State</div><svg class="x" style="left:1035.5px" width="11" height="11" viewBox="0 0 11 11"><path d="M1 1 L10 10 M10 1 L1 10" stroke="#df2c49" stroke-width="2.05" fill="none"/></svg><div class="c" style="left:1188.84px;letter-spacing:0.224px">Dictionary reference</div></div>
<div class="abs" style="left:1826px;top:311px;width:10px;height:619px;background:#e6ebfd"></div>
<svg class="abs" style="left:1828px;top:317px" width="6" height="4" viewBox="0 0 6 4"><path d="M0 4H6L3 0Z" fill="#b3b7c6"/></svg>
<svg class="abs" style="left:1828px;top:921px" width="6" height="3.5" viewBox="0 0 6 4"><path d="M0 0H6L3 4Z" fill="#b3b7c6"/></svg>
<div class="abs" style="left:321px;top:930px;width:1515px;height:12px;background:#e6ebfd"></div>
<div class="abs" style="left:381px;top:933px;width:1430px;height:6px;background:#b4bac9;border-radius:3px"></div>
<svg class="abs" style="left:325px;top:933px" width="4" height="6" viewBox="0 0 4 6"><path d="M4 0V6L0 3Z" fill="#b3b7c6"/></svg>
<svg class="abs" style="left:1817px;top:933px" width="4" height="6" viewBox="0 0 4 6"><path d="M0 0V6L4 3Z" fill="#b3b7c6"/></svg>
<div class="abs" style="left:1725.4px;top:396.2px;width:105.2px;height:46.4px;border:4.2px solid #90d340;border-radius:8px;box-shadow:inset 0 0 7px 1px rgba(60,60,60,0.38), 0 1px 6px rgba(40,40,40,0.4)"></div>
<svg class="abs" style="left:1754px;top:406px" width="30" height="27" viewBox="0 0 30 27"><polygon points="0.2,13.5 7.2,0.3 22.8,0.3 29.8,13.5 22.8,26.7 7.2,26.7" fill="#e1e4fa"/><g transform="translate(15 13.5) scale(0.83) translate(-15 -13.5)"><g fill="none" stroke="#3232d2" stroke-width="1.5" stroke-linejoin="round" stroke-linecap="round"><path d="M14.5 8.2H10.2a1.6 1.6 0 0 0-1.6 1.6v8.6a1.6 1.6 0 0 0 1.6 1.6h8.6a1.6 1.6 0 0 0 1.6-1.6V14.6"/><path d="M19.4 6.6a1.5 1.5 0 0 1 2.1 2.1L15.2 15l-2.8.7.7-2.8z"/></g></g></svg>
<svg class="abs" style="left:1786.6px;top:406px" width="30" height="27" viewBox="0 0 30 27"><polygon points="0.2,13.5 7.2,0.3 22.8,0.3 29.8,13.5 22.8,26.7 7.2,26.7" fill="#e1e4fa"/><g transform="translate(15 13.5) scale(0.83) translate(-15 -13.5)"><g fill="none" stroke="#3232d2" stroke-width="1.5" stroke-linejoin="round" stroke-linecap="round"><path d="M8.6 9.2h12.8M12.6 9V7.4a1 1 0 0 1 1-1h2.8a1 1 0 0 1 1 1V9M10 9.4V19a1.6 1.6 0 0 0 1.6 1.6h6.8A1.6 1.6 0 0 0 20 19V9.4"/><path d="M12.7 11.8v6M15 11.8v6M17.3 11.8v6" stroke-width="0.9"/></g></g></svg>
<div class="abs" style="left:321px;top:942px;width:1515px;height:30px;background:#f9f9fc;border-top:1px solid #e8e9f0"></div>
<div class="abs" style="left:389px;top:949px;width:31px;height:30px;background:#cfd0f0"></div>
<svg class="abs" style="left:338.5px;top:960px" width="8" height="10" viewBox="0 0 8 10"><path d="M0.4 0V10H2V0zM8 0V10L2 5z" fill="#7d7d7d"/></svg>
<svg class="abs" style="left:370.5px;top:960px" width="7" height="10" viewBox="0 0 7 10"><path d="M7 0V10L0.5 5z" fill="#7d7d7d"/></svg>
<div class="pg" style="left:401.5px">1</div><div class="pg" style="left:432.5px">2</div><div class="pg" style="left:463.5px">3</div>
<svg class="abs" style="left:495px;top:960px" width="7" height="10" viewBox="0 0 7 10"><path d="M0 0V10L6.5 5z" fill="#333"/></svg>
<svg class="abs" style="left:524.5px;top:960px" width="8" height="10" viewBox="0 0 8 10"><path d="M7.6 0V10H6V0zM0 0V10L6 5z" fill="#333"/></svg>
<div class="pg" style="left:557.5px;color:#333">Page</div>
<div class="abs" style="left:594px;top:949px;width:65px;height:30px;border:1px solid #e3e7fa;border-radius:5px;background:#f9f9fc"></div><div class="pg" style="left:606px;color:#333">1</div>
<div class="pg" style="left:666.5px;color:#333">of 3</div>
<div class="abs" style="left:700px;top:949px;width:65px;height:30px;border:1px solid #e3e7fa;border-radius:5px;background:#f9f9fc;overflow:hidden"><div style="position:absolute;left:37px;top:0;width:28px;height:30px;background:#e7ebfd"></div></div><div class="pg" style="left:711px;color:#333">20</div>
<svg class="abs" style="left:746px;top:960.5px" width="9" height="7" viewBox="0 0 8 6"><path d="M0 0H8L4 6Z" fill="#3535d0"/></svg>
<div class="pg" style="left:771.5px;color:#333">items per page</div>
<div class="pg" style="left:1690.5px;color:#333;letter-spacing:-0.19px">1 - 20 of 48 items</div>
<svg class="abs" style="left:1808px;top:955px;overflow:visible" width="16" height="18" viewBox="0 0 16 18"><path d="M8.4 3.9 H8 A6.1 6.1 0 1 0 13.3 6.95" fill="none" stroke="#16181d" stroke-width="1.8"/><path d="M8.2 1 12.6 3.9 8.2 6.9z" fill="#16181d"/></svg>
<div class="abs" style="left:1857px;top:0;width:15px;height:966px;background:#fcfcfc;border-radius:0 8px 8px 0"></div>
<div class="abs" style="left:1860px;top:23px;width:9px;height:891px;background:#8b8b8b;border-radius:4.5px"></div>
<svg class="abs" style="left:1859.7px;top:9.8px" width="9.6" height="5.2" viewBox="0 0 10 6"><path d="M0 6H10L5 0Z" fill="#868686"/></svg>
<svg class="abs" style="left:1859.7px;top:951px" width="9.6" height="5.2" viewBox="0 0 10 6"><path d="M0 0H10L5 6Z" fill="#868686"/></svg>
<div style="position:absolute;left:321px;top:226px;width:1500px;height:84px;will-change:transform"><div class="hd" style="left:3.6px;top:19px;letter-spacing:0.562px">Name</div><div class="hd" style="left:260.6px;top:19px;letter-spacing:0.469px">Label</div><div class="hd" style="left:517.6px;top:19px;letter-spacing:0.232px">Dictionary name</div><div class="hd" style="left:774.6px;top:19px;letter-spacing:0.181px">Data format</div><div class="hd" style="left:1031.6px;top:19px;letter-spacing:0.179px">Required</div><div class="hd" style="left:1187.6px;top:19px;letter-spacing:0.195px">Data type</div><div class="hd" style="left:1031.5px;top:53px;letter-spacing:0">is true</div><div class="hd" style="left:1087px;top:53px;letter-spacing:-0.05px">is false</div><svg class="abs" style="left:1435.8px;top:10px;overflow:visible" width="16" height="20" viewBox="0 0 16 20"><path d="M1.6 0H8.5V5a1.7 1.7 0 0 0 1.7 1.7H15.2V18.2a1.6 1.6 0 0 1-1.6 1.6H1.6A1.6 1.6 0 0 1 0 18.2V1.6A1.6 1.6 0 0 1 1.6 0z" fill="#469f74"/><path d="M9.7 0.5 14.7 5.5H10.4a.700.7 0 0 1-.700-.700z" fill="#469f74"/><text x="7.6" y="17.5" font-family="Liberation Sans, sans-serif" font-weight="bold" font-size="11" fill="#fff" text-anchor="middle">X</text></svg><svg class="abs" style="left:1458.9px;top:10px;overflow:visible" width="16" height="20" viewBox="0 0 16 20"><path d="M1.6 0H8.5V5a1.7 1.7 0 0 0 1.7 1.7H15.2V18.2a1.6 1.6 0 0 1-1.6 1.6H1.6A1.6 1.6 0 0 1 0 18.2V1.6A1.6 1.6 0 0 1 1.6 0z" fill="#e35b6b"/><path d="M9.7 0.5 14.7 5.5H10.4a.700.7 0 0 1-.700-.700z" fill="#e35b6b"/><text x="1.5" y="14.8" font-family="Liberation Sans, sans-serif" font-weight="bold" font-size="8.5" fill="#fff" textLength="12.4" lengthAdjust="spacingAndGlyphs">PDF</text></svg></div>
</body></html>
